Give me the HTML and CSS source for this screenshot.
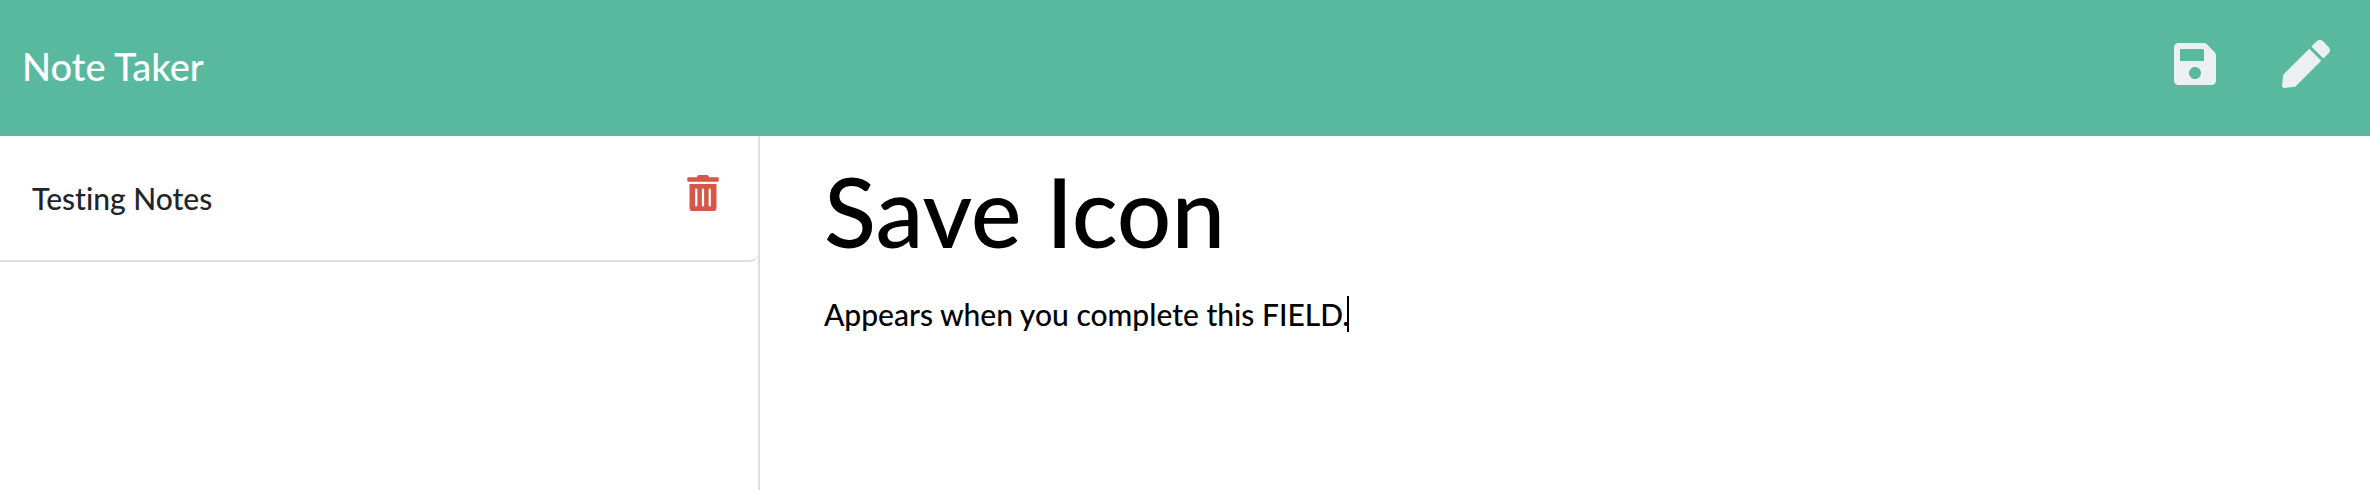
FILE: index.html
```html
<!DOCTYPE html>
<html lang="en">
<head>
  <meta charset="utf-8">
  <meta name="viewport" content="width=device-width, initial-scale=1">
  <title>Note Taker</title>
  <link rel="stylesheet" href="styles.css">
</head>
<body>
  <nav class="navbar">
    <a class="brand" href="#">Note Taker</a>
    <div class="actions">
      <button class="icon-button" type="button" aria-label="Save note">
        <svg class="icon icon-save" viewBox="0 0 448 512" aria-hidden="true"><path d="M433.941 129.941l-83.882-83.882A48 48 0 0 0 316.118 32H48C21.49 32 0 53.49 0 80v352c0 26.51 21.49 48 48 48h352c26.51 0 48-21.49 48-48V163.882a48 48 0 0 0-14.059-33.941zM224 416c-35.346 0-64-28.654-64-64 0-35.346 28.654-64 64-64s64 28.654 64 64c0 35.346-28.654 64-64 64zm96-304.52V212c0 6.627-5.373 12-12 12H76c-6.627 0-12-5.373-12-12V108c0-6.627 5.373-12 12-12h228.52c3.183 0 6.235 1.264 8.485 3.515l3.48 3.48A11.996 11.996 0 0 1 320 111.48z"/></svg>
      </button>
      <button class="icon-button" type="button" aria-label="New note">
        <svg class="icon icon-pen" viewBox="0 0 512 512" aria-hidden="true"><path d="M290.74 93.24l128.02 128.02-277.99 277.99-114.14 12.6C11.35 513.54-1.56 500.62.14 485.34l12.7-114.22 277.9-277.88zm207.2-19.06l-60.11-60.11c-18.75-18.75-49.16-18.75-67.91 0l-56.55 56.55 128.02 128.02 56.55-56.55c18.75-18.76 18.75-49.16 0-67.91z"/></svg>
      </button>
    </div>
  </nav>
  <div class="layout">
    <aside class="sidebar">
      <ul class="notes">
        <li class="note">
          <span class="note-title">Testing Notes</span>
          <button class="icon-button" type="button" aria-label="Delete Testing Notes">
            <svg class="icon icon-trash" viewBox="0 0 448 512" aria-hidden="true"><path d="M32 464a48 48 0 0 0 48 48h288a48 48 0 0 0 48-48V128H32zm272-256a16 16 0 0 1 32 0v224a16 16 0 0 1-32 0zm-96 0a16 16 0 0 1 32 0v224a16 16 0 0 1-32 0zm-96 0a16 16 0 0 1 32 0v224a16 16 0 0 1-32 0zM432 32H312l-9.4-18.7A24 24 0 0 0 281.1 0H166.8a23.72 23.72 0 0 0-21.4 13.3L136 32H16A16 16 0 0 0 0 48v32a16 16 0 0 0 16 16h416a16 16 0 0 0 16-16V48a16 16 0 0 0-16-16z"/></svg>
          </button>
        </li>
      </ul>
    </aside>
    <main class="editor">
      <input class="title-input" type="text" aria-label="Note title" value="Save Icon">
      <div class="text-field">
        <textarea class="text-input" aria-label="Note text" rows="3">Appears when you complete this FIELD.</textarea>
        <span class="caret"></span>
      </div>
    </main>
  </div>
</body>
</html>
```
FILE: styles.css
```css
* {
  box-sizing: border-box;
}

body {
  margin: 0;
  min-height: 100vh;
  display: flex;
  flex-direction: column;
  background: #fff;
  color: #212529;
  font-family: Lato, "Liberation Sans", sans-serif;
  font-size: 30px;
  font-weight: 500;
  font-variant-ligatures: none;
  line-height: 46px;
}

.navbar {
  display: flex;
  align-items: flex-start;
  justify-content: space-between;
  padding: 36px 40px 40px 22px;
  background: #58b99e;
}

.brand {
  color: #fff;
  font-size: 38px;
  line-height: 60px;
  text-decoration: none;
}

.actions {
  display: flex;
  gap: 66px;
  padding-top: 4px;
}

.icon-button {
  display: flex;
  padding: 0;
  border: 0;
  background: none;
  cursor: pointer;
}

.icon {
  display: block;
  height: 48px;
  fill: #ecf0f1;
}

.icon-save {
  width: 42px;
}

.icon-pen {
  width: 48px;
}

.layout {
  flex: 1;
  display: flex;
}

.sidebar {
  width: calc(100% / 3 - 30px);
  border-right: 2px solid #dedede;
}

.notes {
  margin: 0;
  padding: 0;
  list-style: none;
}

.note {
  display: flex;
  align-items: flex-start;
  justify-content: space-between;
  padding: 39px 39px 39px 32px;
  border-bottom: 2px solid #dedede;
  border-bottom-right-radius: 8px;
}

.icon-trash {
  width: 32px;
  height: 36px;
  fill: #d65745;
}

.editor {
  flex: 1;
  display: flex;
  flex-direction: column;
  padding: 14px 30px 0 64px;
}

.title-input,
.text-input {
  display: block;
  width: 100%;
  margin: 0;
  padding: 0;
  border: 0;
  outline: 0;
  background: transparent;
  color: #000;
  font: inherit;
  font-variant-ligatures: none;
}

.title-input {
  height: 120px;
  font-size: 96px;
}

.text-field {
  position: relative;
  padding-top: 21px;
}

.text-input {
  resize: none;
}

.caret {
  position: absolute;
  top: 26px;
  left: 523px;
  width: 2px;
  height: 36px;
  background: #000;
}
```
